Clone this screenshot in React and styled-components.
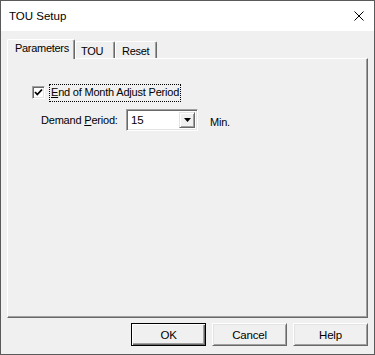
import React from "react";
import styled, { createGlobalStyle } from "styled-components";

const Global = createGlobalStyle`
  html, body { margin: 0; padding: 0; background: #ffffff; }
  body { font-family: "Liberation Sans", Arial, sans-serif; }
  * { box-sizing: border-box; }
`;

const Window = styled.div`
  width: 375px;
  height: 355px;
  border: 1px solid #5a5a5a;
  display: flex;
  flex-direction: column;
  background: #f0f0f0;
`;

const TitleBar = styled.div`
  height: 30px;
  background: #ffffff;
  display: flex;
  align-items: center;
  justify-content: space-between;
  padding: 0 10px 0 8px;
`;

const Title = styled.span`
  font-family: "Liberation Sans", Arial, sans-serif;
  font-size: 11.5px;
  color: #000;
`;

const CloseIcon = styled.svg`
  width: 10px;
  height: 10px;
  display: block;
`;

const Body = styled.div`
  flex: 1;
  display: flex;
  flex-direction: column;
  padding: 8px 6px 8px 6px;
  font-family: "Liberation Sans", Arial, sans-serif;
  font-size: 11px;
  letter-spacing: -0.2px;
  color: #000;
`;

const TabStrip = styled.div`
  display: flex;
  align-items: flex-end;
  height: 19px;
`;

const Tab = styled.div`
  position: relative;
  z-index: ${(p) => (p.$active ? 2 : 1)};
  height: ${(p) => (p.$active ? "20px" : "17px")};
  margin-bottom: ${(p) => (p.$active ? "-1px" : "0")};
  width: ${(p) => p.$w}px;
  background: #f0f0f0;
  border-left: 1px solid #ffffff;
  border-top: 1px solid #ffffff;
  border-top-left-radius: 2px;
  border-top-right-radius: 2px;
  box-shadow: inset -1px 0 0 #a0a0a0;
  border-right: 1px solid #696969;
  display: flex;
  align-items: ${(p) => (p.$active ? "flex-start" : "center")};
  padding-top: ${(p) => (p.$active ? "2px" : "1px")};
  padding-left: ${(p) => p.$pl}px;
  font-size: 11px;
  letter-spacing: -0.3px;
  white-space: nowrap;
`;

const Panel = styled.div`
  flex: 1;
  border-left: 1px solid #ffffff;
  border-top: 1px solid #ffffff;
  border-right: 1px solid #696969;
  border-bottom: 1px solid #696969;
  box-shadow: inset -1px -1px 0 #a0a0a0;
  padding: 25px 0 0 24px;
  display: flex;
  flex-direction: column;
`;

const CheckRow = styled.div`
  display: flex;
  align-items: center;
  height: 17px;
`;

const CheckBox = styled.div`
  width: 13px;
  height: 13px;
  background: #ffffff;
  border-top: 1px solid #a0a0a0;
  border-left: 1px solid #a0a0a0;
  border-right: 1px solid #ffffff;
  border-bottom: 1px solid #ffffff;
  box-shadow: inset 1px 1px 0 #696969, inset -1px -1px 0 #e3e3e3;
  display: flex;
  align-items: center;
  justify-content: center;
`;

const CheckSvg = styled.svg`
  width: 9px;
  height: 9px;
  display: block;
`;

const FocusLabel = styled.span`
  margin-left: 4px;
  border: 1px dotted #000;
  padding: 1px 1px 2px 1px;
  line-height: 13px;
`;

const Mn = styled.span`
  text-decoration: underline;
`;

const DemandRow = styled.div`
  display: flex;
  align-items: center;
  margin-top: 8px;
  margin-left: 9px;
  height: 22px;
`;

const FieldLabel = styled.span`
  width: 85px;
`;

const Combo = styled.div`
  width: 72px;
  height: 22px;
  background: #ffffff;
  border-top: 1px solid #a0a0a0;
  border-left: 1px solid #a0a0a0;
  border-right: 1px solid #ffffff;
  border-bottom: 1px solid #ffffff;
  box-shadow: inset 1px 1px 0 #696969, inset -1px -1px 0 #e3e3e3;
  display: flex;
  align-items: stretch;
  padding: 2px;
`;

const ComboText = styled.span`
  flex: 1;
  display: flex;
  align-items: center;
  padding-left: 2px;
  font-size: 11.5px;
`;

const DropButton = styled.div`
  width: 16px;
  background: #f0f0f0;
  border-top: 1px solid #e3e3e3;
  border-left: 1px solid #e3e3e3;
  border-right: 1px solid #696969;
  border-bottom: 1px solid #696969;
  box-shadow: inset 1px 1px 0 #ffffff, inset -1px -1px 0 #a0a0a0;
  display: flex;
  align-items: center;
  justify-content: center;
`;

const Arrow = styled.svg`
  width: 7px;
  height: 4px;
  display: block;
`;

const Unit = styled.span`
  margin-left: 12px;
  padding-top: 3px;
`;

const Footer = styled.div`
  display: flex;
  justify-content: flex-end;
  gap: 6px;
  margin-top: 5px;
`;

const Button = styled.button`
  width: 75px;
  height: 23px;
  font-family: "Liberation Sans", Arial, sans-serif;
  font-size: 11.5px;
  letter-spacing: -0.2px;
  color: #000;
  background: #f0f0f0;
  padding: 0;
  border-top: 1px solid ${(p) => (p.$default ? "#000" : "#ffffff")};
  border-left: 1px solid ${(p) => (p.$default ? "#000" : "#ffffff")};
  border-right: 1px solid ${(p) => (p.$default ? "#000" : "#696969")};
  border-bottom: 1px solid ${(p) => (p.$default ? "#000" : "#696969")};
  box-shadow: ${(p) =>
    p.$default
      ? "inset 1px 1px 0 #ffffff, inset -1px -1px 0 #696969, inset -2px -2px 0 #a0a0a0"
      : "inset 1px 1px 0 #e3e3e3, inset -1px -1px 0 #a0a0a0"};
`;

export default function App() {
  return (
    <>
      <Global />
      <Window>
        <TitleBar>
          <Title>TOU Setup</Title>
          <CloseIcon viewBox="0 0 10 10">
            <path d="M0.5 0.5 L9.5 9.5 M9.5 0.5 L0.5 9.5" stroke="#000" strokeWidth="1" fill="none" />
          </CloseIcon>
        </TitleBar>
        <Body>
          <TabStrip>
            <Tab $active $w={68} $pl={7}>Parameters</Tab>
            <Tab $w={40} $pl={5}>TOU</Tab>
            <Tab $w={42} $pl={6}>Reset</Tab>
          </TabStrip>
          <Panel>
            <CheckRow>
              <CheckBox>
                <CheckSvg viewBox="0 0 9 9">
                  <path d="M1 4 L3.3 6.5 L8 1.5" stroke="#000" strokeWidth="1.8" fill="none" />
                </CheckSvg>
              </CheckBox>
              <FocusLabel>
                <Mn>E</Mn>nd of Month Adjust Period
              </FocusLabel>
            </CheckRow>
            <DemandRow>
              <FieldLabel>
                Demand <Mn>P</Mn>eriod:
              </FieldLabel>
              <Combo>
                <ComboText>15</ComboText>
                <DropButton>
                  <Arrow viewBox="0 0 7 4">
                    <path d="M0 0 H7 L3.5 4 Z" fill="#000" />
                  </Arrow>
                </DropButton>
              </Combo>
              <Unit>Min.</Unit>
            </DemandRow>
          </Panel>
          <Footer>
            <Button $default>OK</Button>
            <Button>Cancel</Button>
            <Button>Help</Button>
          </Footer>
        </Body>
      </Window>
    </>
  );
}
